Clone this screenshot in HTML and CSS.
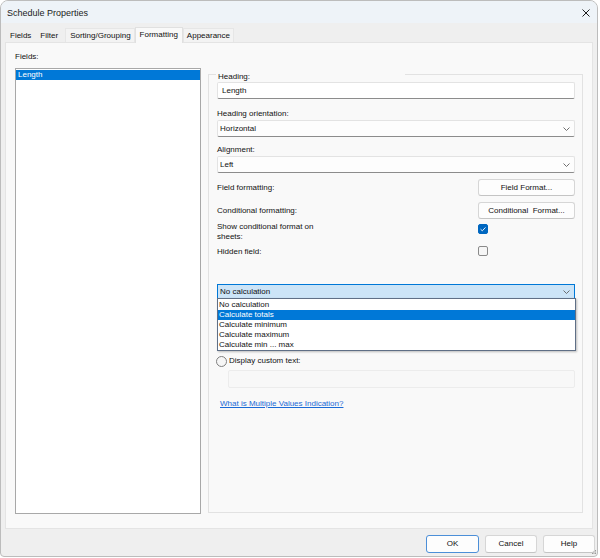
FILE: index.html
```html
<!DOCTYPE html>
<html>
<head>
<meta charset="utf-8">
<title>Schedule Properties</title>
<link rel="stylesheet" href="styles.css">
</head>
<body>
<div class="window">
  <div class="titlebar">
    <span class="title">Schedule Properties</span>
    <span class="close">
      <svg width="8" height="8" viewBox="0 0 8 8"><path d="M0.5 0.5 L7.5 7.5 M7.5 0.5 L0.5 7.5" stroke="#1b1b1b" stroke-width="1" fill="none"/></svg>
    </span>
  </div>
  <div class="tabs">
    <span class="tab">Fields</span>
    <span class="tab">Filter</span>
    <span class="tab light">Sorting/Grouping</span>
    <span class="tab active">Formatting</span>
    <span class="tab light">Appearance</span>
  </div>
  <div class="panel">
    <div class="fields-col">
      <div class="caption">Fields:</div>
      <div class="listbox">
        <div class="list-item selected">Length</div>
      </div>
    </div>
    <fieldset class="group">
      <legend>Heading:</legend>
      <div class="textbox first">Length</div>
      <div class="caption gap-label">Heading orientation:</div>
      <div class="select">
        <span>Horizontal</span>
        <svg class="chev" width="7" height="4" viewBox="0 0 7 4"><path d="M0.5 0.5 L3.5 3.5 L6.5 0.5" stroke="#606060" fill="none" stroke-width="0.9"/></svg>
      </div>
      <div class="caption gap-label2">Alignment:</div>
      <div class="select">
        <span>Left</span>
        <svg class="chev" width="7" height="4" viewBox="0 0 7 4"><path d="M0.5 0.5 L3.5 3.5 L6.5 0.5" stroke="#606060" fill="none" stroke-width="0.9"/></svg>
      </div>
      <div class="row row-btn1">
        <span class="caption">Field formatting:</span>
        <span class="btn">Field Format...</span>
      </div>
      <div class="row row-btn2">
        <span class="caption">Conditional formatting:</span>
        <span class="btn">Conditional&nbsp; Format...</span>
      </div>
      <div class="row row-check1">
        <span class="caption wrap">Show conditional format on sheets:</span>
        <span class="check checked">
          <svg width="10" height="10" viewBox="0 0 10 10"><path d="M2.6 5.2 L4.3 6.8 L7.5 3.4" stroke="#ffffff" stroke-width="0.9" fill="none"/></svg>
        </span>
      </div>
      <div class="row row-check2">
        <span class="caption">Hidden field:</span>
        <span class="check"></span>
      </div>
      <div class="combo-wrap">
        <div class="combo">
          <span>No calculation</span>
          <svg class="chev" width="7" height="4" viewBox="0 0 7 4"><path d="M0.5 0.5 L3.5 3.5 L6.5 0.5" stroke="#606060" fill="none" stroke-width="0.9"/></svg>
        </div>
        <div class="dropdown">
          <div class="opt">No calculation</div>
          <div class="opt selected">Calculate totals</div>
          <div class="opt">Calculate minimum</div>
          <div class="opt">Calculate maximum</div>
          <div class="opt">Calculate min ... max</div>
        </div>
      </div>
      <div class="radio-row">
        <span class="radio"></span>
        <span class="caption">Display custom text:</span>
      </div>
      <div class="textbox disabled"></div>
      <a class="link" href="#">What is Multiple Values Indication?</a>
    </fieldset>
  </div>
  <div class="footer">
    <span class="btn foot default">OK</span>
    <span class="btn foot">Cancel</span>
    <span class="btn foot">Help</span>
    <svg class="grip" width="5" height="5" viewBox="0 0 5 5"><g fill="#9a9a9a"><rect x="3" y="0" width="1" height="1"/><rect x="1.5" y="1.5" width="1" height="1"/><rect x="3" y="1.5" width="1" height="1"/><rect x="0" y="3" width="1" height="1"/><rect x="1.5" y="3" width="1" height="1"/><rect x="3" y="3" width="1" height="1"/></g></svg>
  </div>
</div>
</body>
</html>
```

FILE: styles.css
```css
* { box-sizing: border-box; }
html, body {
  margin: 0;
  padding: 0;
  background: #ffffff;
}
body {
  font-family: "Liberation Sans", Arial, sans-serif;
  font-size: 8px;
  line-height: 10px;
  color: #111111;
}
.window {
  width: 598px;
  height: 557px;
  border: 1px solid #bcbcbc;
  border-radius: 8px 8px 4px 4px;
  background: #efefef;
  overflow: hidden;
  display: flex;
  flex-direction: column;
  position: relative;
}
.titlebar {
  height: 22px;
  background: #eef3f8;
  display: flex;
  align-items: center;
  justify-content: space-between;
  padding: 0 7px 0 6px;
  flex: none;
}
.title {
  font-size: 9px;
  color: #1b1b1b;
  padding-top: 1px;
}
.close {
  display: flex;
  width: 8px;
  height: 8px;
  margin-top: 2px;
}
.tabs {
  height: 19px;
  flex: none;
  display: flex;
  align-items: flex-end;
  padding-left: 4px;
}
.tab {
  height: 14px;
  padding: 0 4px;
  line-height: 15px;
  display: block;
}
.tab:nth-child(1) { padding: 0 5px 0 5px; }
.tab:nth-child(2) { padding: 0 7px 0 4px; }
.tab.light {
  background: #f3f3f3;
  border: 1px solid #e6e6e6;
  border-bottom: none;
  line-height: 14px;
}
.tab:nth-child(3) { padding: 0 3px 0 4px; }
.tab.active {
  height: 16px;
  line-height: 13px;
  background: #f9f9f9;
  border: 1px solid #e0e0e0;
  border-bottom: none;
  padding: 0 4px;
  position: relative;
  z-index: 1;
  margin-bottom: -1px;
}
.tab:nth-child(5) { padding: 0 3px; }
.panel {
  height: 487px;
  flex: none;
  margin: 0 4px;
  background: #f9f9f9;
  border: 1px solid #e4e4e4;
  padding: 9px 9px 14px 9px;
  display: grid;
  grid-template-columns: 186px 1fr;
  column-gap: 7px;
}
.fields-col {
  display: flex;
  flex-direction: column;
}
.caption { display: block; }
.fields-col .caption { margin-bottom: 6px; }
.listbox {
  flex: 1;
  background: #ffffff;
  border: 1px solid #a8a8a8;
  padding: 1px 0 0 0;
}
.list-item {
  height: 10px;
  line-height: 10px;
  padding-left: 2px;
}
.list-item.selected {
  background: #0078d7;
  color: #ffffff;
}
.group {
  margin: 17px 0 1px 0;
  padding: 0 7px 0 8px;
  border: 1px solid #e2e2e2;
  min-width: 0;
  position: relative;
}
.group legend {
  width: 189px;
  margin-left: -1px;
  padding: 1px 0 0 2px;
  height: 10px;
  line-height: 14px;
}
.textbox {
  height: 17px;
  background: #ffffff;
  border: 1px solid #e3e3e3;
  border-bottom-color: #8c8c8c;
  border-radius: 2px;
  padding: 0 4px;
  line-height: 15px;
}
.textbox.first { margin-top: 3px; }
.gap-label { margin-top: 10px; }
.gap-label2 { margin-top: 8px; }
.select {
  margin-top: 1px;
  height: 17px;
  background: #fdfdfd;
  border: 1px solid #e3e3e3;
  border-bottom-color: #8c8c8c;
  border-radius: 2px;
  padding: 0 4px 0 2px;
  line-height: 15px;
  display: flex;
  align-items: center;
  justify-content: space-between;
}
.chev { flex: none; }
.row {
  display: grid;
  grid-template-columns: 1fr 97px;
  align-items: center;
}
.row-btn1 { margin-top: 6px; }
.row-btn2 { margin-top: 6px; }
.row-check1 { margin-top: 3px; align-items: start; }
.row-check2 { margin-top: 5px; }
.caption.wrap { width: 112px; }
.btn {
  height: 17px;
  background: #fdfdfd;
  border: 1px solid #d6d6d6;
  border-bottom-color: #c4c4c4;
  border-radius: 3px;
  text-align: center;
  line-height: 15px;
  display: block;
}
.check {
  width: 10px;
  height: 10px;
  border: 1px solid #8a8a8a;
  border-radius: 2px;
  background: #f6f6f6;
  display: block;
}
.row-check1 .check { margin-top: 2px; }
.row-check2 .check { margin-top: -2px; }
.check.checked {
  background: #0067c0;
  border-color: #0067c0;
  display: flex;
}
.check.checked svg { margin: -1px; }
.combo-wrap {
  position: relative;
  margin-top: 27px;
}
.combo {
  height: 15px;
  background: #cce4f7;
  border: 1px solid #0078d7;
  padding: 0 4px 0 2px;
  line-height: 13px;
  display: flex;
  align-items: center;
  justify-content: space-between;
}
.dropdown {
  position: absolute;
  top: 14px;
  left: 0;
  right: -1px;
  background: #ffffff;
  border: 1px solid #5f6f86;
  box-shadow: 1px 1px 2px rgba(0,0,0,0.25);
  padding: 1px 0 0 0;
  z-index: 5;
}
.opt {
  height: 10px;
  line-height: 10px;
  padding-left: 1px;
}
.opt.selected {
  background: #0078d7;
  color: #ffffff;
}
.radio-row {
  margin-top: 57px;
  display: flex;
  align-items: center;
  gap: 2px;
  height: 10px;
}
.radio {
  width: 11px;
  height: 11px;
  border: 1px solid #808080;
  border-radius: 50%;
  background: #f6f6f6;
  display: block;
  margin-left: -1px;
}
.textbox.disabled {
  margin-top: 4px;
  margin-left: 11px;
  height: 18px;
  background: #f8f8f8;
  border: 1px solid #ececec;
}
.link {
  display: inline-block;
  margin-top: 11px;
  margin-left: 3px;
  color: #1a6ad6;
  text-decoration: underline;
}
.footer {
  flex: 1;
  display: flex;
  justify-content: flex-end;
  align-items: flex-start;
  padding: 6px 2px 0 0;
  gap: 6px;
  position: relative;
}
.btn.foot {
  width: 52px;
  height: 18px;
  line-height: 16px;
}
.btn.foot.default {
  width: 53px;
  border-color: #4c8fd8;
}
.grip {
  position: absolute;
  right: 0;
  bottom: 1px;
}
```
